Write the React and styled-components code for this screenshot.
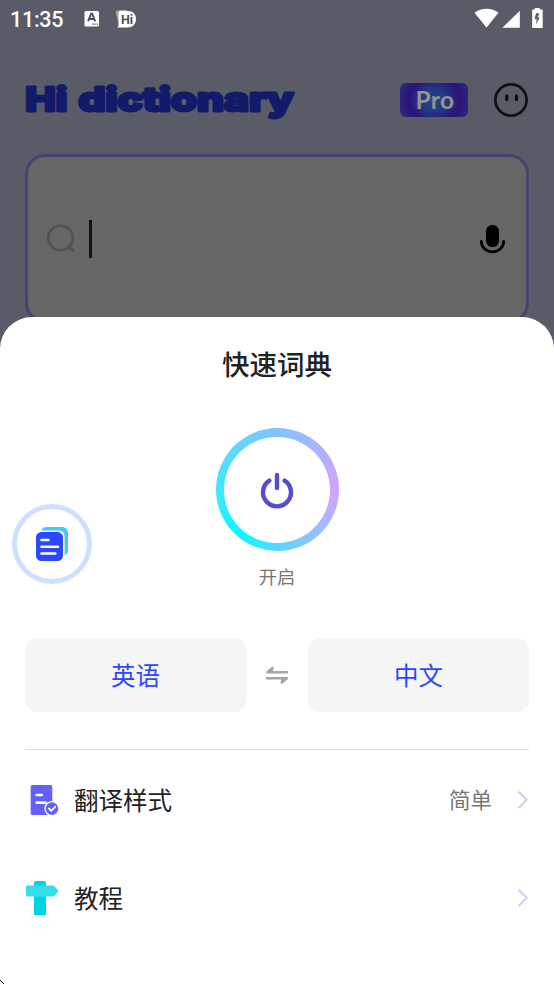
import React, { useState } from "react";
import styled, { createGlobalStyle, ThemeProvider } from "styled-components";

const theme = {
  text: {
    main: "#222222",
    sub: "#777777",
    link: "#2b47ff",
  },
  background: {
    main: "#ffffff",
    sub: "#f5f5f5",
    dimmed: "#595b66",
  },
  fonts: {
    latin: "Roboto, \"Noto Sans\", sans-serif",
    chinese: "\"Noto Sans CJK SC\", sans-serif",
  },
};

const GlobalStyle = createGlobalStyle`
  * {
    box-sizing: border-box;
  }

  body {
    margin: 0;
    overflow: hidden;
  }

  button {
    padding: 0;
    border: none;
    background: none;
    font: inherit;
    cursor: pointer;
  }

  svg {
    display: block;
    flex: none;
  }
`;

const Screen = styled.div`
  display: flex;
  flex-direction: column;
  width: 554px;
  height: 984px;
  overflow: hidden;
  background-color: ${({ theme }) => theme.background.dimmed};
  font-family: ${({ theme }) => theme.fonts.chinese};
`;

const StatusBar = styled.div`
  display: flex;
  align-items: center;
  flex: none;
  height: 40px;
  padding: 0 10px 2px;
  color: #ffffff;
  font-family: ${({ theme }) => theme.fonts.latin};

  .time {
    width: 74px;
    font-size: 21.5px;
    font-weight: 500;
    line-height: 38px;
    letter-spacing: -0.25px;
    padding-top: 2px;
  }

  .system {
    margin-left: auto;
  }
`;

const Header = styled.header`
  display: flex;
  align-items: center;
  flex: none;
  height: 114px;
  padding: 6px 26px 0 24px;
`;

const ProBadge = styled.div`
  width: 68px;
  height: 34px;
  margin: 0 26px 0 auto;
  padding-left: 2px;
  border-radius: 6px;
  background: radial-gradient(ellipse 44px 38px at 50% 50%, #1a4c7c 0%, #223987 28%, #2b1279 58%, #292078 72%, #203b82 100%);
  color: #96918f;
  font-family: Lato, sans-serif;
  font-size: 24.5px;
  font-weight: 700;
  line-height: 34px;
  letter-spacing: 0.4px;
  text-align: center;
`;

const SearchBox = styled.div`
  display: flex;
  align-items: center;
  flex: none;
  width: 504px;
  height: 169px;
  margin: 0 25px;
  padding: 0 18px 0 18px;
  border: 3px solid #41456f;
  border-radius: 20px;
  background-color: #666666;

  .caret {
    width: 3px;
    height: 38px;
    margin-left: 14px;
    background-color: #111111;
  }

  .mic {
    margin-left: auto;
  }
`;

const Sheet = styled.section`
  display: flex;
  flex-direction: column;
  position: relative;
  flex: none;
  height: 667px;
  margin-top: -6px;
  padding: 0 25px;
  border-radius: 32px 32px 0 0;
  background-color: ${({ theme }) => theme.background.main};
`;

const Title = styled.h1`
  height: 111px;
  margin: 0;
  color: ${({ theme }) => theme.text.main};
  font-size: 27.5px;
  font-weight: 500;
  line-height: 92px;
  text-align: center;
`;

const PowerButton = styled.button`
  display: flex;
  align-items: center;
  justify-content: center;
  align-self: center;
  width: 123px;
  height: 123px;
  border-radius: 50%;
  background: conic-gradient(from 90deg, #d3a4ff, #86c6ff 60deg, #4edcff 95deg, #0df6ff 132deg, #3fe9ff 175deg, #82c4ff 270deg, #b1b0ff 325deg, #d3a4ff);

  .inner {
    display: flex;
    align-items: center;
    justify-content: center;
    width: 106px;
    height: 106px;
    border-radius: 50%;
    background-color: ${({ theme }) => theme.background.main};
  }
`;

const PowerLabel = styled.p`
  height: 87px;
  margin: 0;
  color: ${({ theme }) => theme.text.sub};
  font-size: 18.3px;
  line-height: 50px;
  text-align: center;
`;

const LanguageBar = styled.div`
  display: flex;
  align-items: center;
  justify-content: space-between;
  height: 74px;
`;

const LanguageButton = styled.button`
  width: 221px;
  height: 74px;
  border-radius: 12px;
  background-color: ${({ theme }) => theme.background.sub};
  color: ${({ theme }) => theme.text.link};
  font-size: 24.5px;
  line-height: 72px;
`;

const Divider = styled.hr`
  width: 100%;
  height: 1px;
  margin: 37px 0 1px;
  border: none;
  background-color: #dedede;
`;

const MenuRow = styled.div`
  display: flex;
  align-items: center;
  height: 98px;
  color: ${({ theme }) => theme.text.main};
  font-size: 24.5px;
  cursor: pointer;

  .label {
    margin: 0 0 2px 14px;
  }

  .value {
    margin: 0 25px 4px auto;
    color: ${({ theme }) => theme.text.sub};
    font-size: 21.5px;
  }

  .arrow {
    margin-left: ${({ $hasValue }) => ($hasValue ? "0" : "auto")};
  }
`;

const FloatingButton = styled.button`
  display: flex;
  align-items: center;
  justify-content: center;
  position: absolute;
  top: 187px;
  left: 12px;
  width: 80px;
  height: 80px;
  border: 5px solid #cfe0ff;
  border-radius: 50%;
  background-color: ${({ theme }) => theme.background.main};
`;

const Pointer = styled.svg`
  position: absolute;
  bottom: 0;
  left: 0;
`;

function NotificationIcons() {
  return (
    <svg width="54" height="22" viewBox="0 0 54 22">
      <rect x="0.5" y="3" width="14.5" height="15.5" rx="1.5" fill="#fff" />
      <path d="M4 13.4 7.1 5.6h1L11.2 13.4M5.4 11h4.4" fill="none" stroke="#4a4b54" strokeWidth="1.8" />
      <path d="M8 16.2h1.4m.9 0h1.4m.9 0h1.4" stroke="#595b66" strokeWidth="1.3" />
      <path d="M31.5 3.5C35 1.5 43 .5 47 5l-5 11-7 1Z" fill="#a5a6ab" />
      <path d="M36 3h8c5 0 8 3.5 8 8 0 5-3.5 8.5-8.5 8.5H33.4c1.6-2 1.2-4 1.2-8V4.5Z" fill="#fff" />
      <text x="37" y="16" fill="#4e4f59" fontFamily="Roboto, sans-serif" fontSize="12.5" fontWeight="700" textLength="12">Hi</text>
    </svg>
  );
}

function SystemIcons() {
  return (
    <svg className="system" width="70" height="22" viewBox="0 0 70 22">
      <path d="M0.5 4.8C7-.6 18-.6 24.5 4.8L12.5 19.5Z" fill="#fff" />
      <path d="M45.8 2.7v17.1H28.4Z" fill="#fff" />
      <path d="M58.2 1.4h2.6V0h5v1.4h2.9v18.5H58.2Z" fill="#fff" />
      <path d="m62 5.2-1.4 6h2.2l-1 5.3 4-7.1h-2.2l1.8-4.2Z" fill="#595b66" />
    </svg>
  );
}

function Logo() {
  return (
    <svg width="272" height="50" viewBox="0 0 272 50" role="img" aria-label="Hi dictionary">
      <g
        fill="#111b69"
        stroke="#111b69"
        strokeWidth="3"
        strokeLinejoin="round"
        fontFamily="Inter, sans-serif"
        fontSize="33"
        fontWeight="800"
      >
        <text x="1.2" y="36" textLength="42" lengthAdjust="spacingAndGlyphs">Hi</text>
        <text x="54.5" y="36" textLength="215" lengthAdjust="spacingAndGlyphs">dictionary</text>
      </g>
    </svg>
  );
}

function FaceIcon() {
  return (
    <svg width="34" height="34" viewBox="0 0 34 34" fill="none" stroke="#111" strokeLinecap="round">
      <circle cx="17" cy="17" r="15.6" strokeWidth="2.7" />
      <path d="M12.8 12.9v3.6M22.4 12.9v3.6" strokeWidth="3.3" />
    </svg>
  );
}

function SearchIcon() {
  return (
    <svg width="29" height="30" viewBox="0 0 29 30" fill="none" stroke="#505155" strokeWidth="2.6">
      <circle cx="14.5" cy="14" r="12.3" />
      <path d="m22.8 22.5 5 5" />
    </svg>
  );
}

function MicIcon() {
  return (
    <svg className="mic" width="30" height="30" viewBox="0 0 30 30">
      <rect x="8" y="1" width="13" height="22" rx="6.3" fill="#000" />
      <path d="M3.3 17.3a11.2 10.6 0 0 0 22.4 0" fill="none" stroke="#000" strokeWidth="2.7" strokeLinecap="round" />
    </svg>
  );
}

function PowerIcon() {
  return (
    <svg width="36" height="40" viewBox="0 0 36 40" fill="none" stroke="#554dce" strokeWidth="4.4" strokeLinecap="round">
      <path d="M18 5v13M10.4 10.6a14 14 0 1 0 15.2 0" />
    </svg>
  );
}

function CardsIcon() {
  return (
    <svg width="34" height="36" viewBox="0 0 34 36">
      <path d="M6.2 4.5C7.2 2 8.9 1 11.5 1h15c4 0 6.5 2.5 6.5 6.5v17c0 2.5-1 4-3.3 4.8V11c0-4-2.5-6.5-6.5-6.5Z" fill="#40c9ff" />
      <rect x="1" y="6" width="27" height="29" rx="5.5" fill="#2b47ff" />
      <path d="M6.5 14h7M6.5 20.7H23M6.5 27.5h13.8" stroke="#fff" strokeWidth="2.6" strokeLinecap="round" />
    </svg>
  );
}

function SwapIcon() {
  return (
    <svg width="24" height="18" viewBox="0 0 24 18" fill="none" stroke="#a5a5a5" strokeWidth="2.6" strokeLinecap="round" strokeLinejoin="round">
      <path d="M22 6.3H2.5L7.5 2M2 12.3h19.8L16.8 16.5" />
      <path d="M3.5 6 7.5 2.4V6ZM20.8 12.6l-4 3.5v-3.5Z" fill="#a5a5a5" strokeWidth="0.8" />
    </svg>
  );
}

function StyleIcon() {
  return (
    <svg width="35" height="36" viewBox="0 0 35 36">
      <rect x="5.7" y="3" width="21.6" height="30" rx="1.7" fill="#655fff" />
      <path d="M11.7 13h5.1M11.7 20.7h8.8" stroke="#fff" strokeWidth="2.7" strokeLinecap="round" />
      <circle cx="27" cy="26.6" r="7" fill="#655fff" stroke="#fff" strokeWidth="1.4" />
      <path d="m23.8 26.4 2.4 2.5 4.2-4.3" fill="none" stroke="#fff" strokeWidth="1.7" strokeLinecap="round" strokeLinejoin="round" />
    </svg>
  );
}

function GuideIcon() {
  return (
    <svg width="35" height="36" viewBox="0 0 35 36">
      <rect x="9" y="1" width="12" height="34" rx="1.5" fill="#00d5df" />
      <path d="M2.5 5.5h25c1 0 1.5.3 2.2 1l4 4.5-4 4.5c-.7.8-1.2 1-2.2 1h-25C1.5 16.5 1 16 1 15V7c0-1 .5-1.5 1.5-1.5Z" fill="#35dde8" />
    </svg>
  );
}

function ArrowIcon() {
  return (
    <svg className="arrow" width="12" height="20" viewBox="0 0 12 20" fill="none" stroke="#c7d3ea" strokeWidth="2">
      <path d="m1.5 1.7 8.2 8.1-8.2 8.3" />
    </svg>
  );
}

function App() {
  const [languages, setLanguages] = useState(["英语", "中文"]);
  const [source, target] = languages;

  const handleSwapClick = function () {
    setLanguages([target, source]);
  };

  return (
    <ThemeProvider theme={theme}>
      <GlobalStyle />
      <Screen>
        <StatusBar>
          <span className="time">11:35</span>
          <NotificationIcons />
          <SystemIcons />
        </StatusBar>
        <Header>
          <Logo />
          <ProBadge>Pro</ProBadge>
          <FaceIcon />
        </Header>
        <SearchBox>
          <SearchIcon />
          <div className="caret" />
          <MicIcon />
        </SearchBox>
        <Sheet>
          <Title>快速词典</Title>
          <PowerButton>
            <span className="inner"><PowerIcon /></span>
          </PowerButton>
          <PowerLabel>开启</PowerLabel>
          <LanguageBar>
            <LanguageButton>{source}</LanguageButton>
            <button onClick={handleSwapClick}><SwapIcon /></button>
            <LanguageButton>{target}</LanguageButton>
          </LanguageBar>
          <Divider />
          <MenuRow $hasValue>
            <StyleIcon />
            <span className="label">翻译样式</span>
            <span className="value">简单</span>
            <ArrowIcon />
          </MenuRow>
          <MenuRow>
            <GuideIcon />
            <span className="label">教程</span>
            <ArrowIcon />
          </MenuRow>
          <FloatingButton><CardsIcon /></FloatingButton>
          <Pointer width="4" height="4" viewBox="0 0 4 4" shapeRendering="crispEdges">
            <path d="M0 0h1v1H0zM1 1h1v1H1zM2 2h1v1H2zM3 3h1v1H3z" fill="#111" />
          </Pointer>
        </Sheet>
      </Screen>
    </ThemeProvider>
  );
}

export default App;
